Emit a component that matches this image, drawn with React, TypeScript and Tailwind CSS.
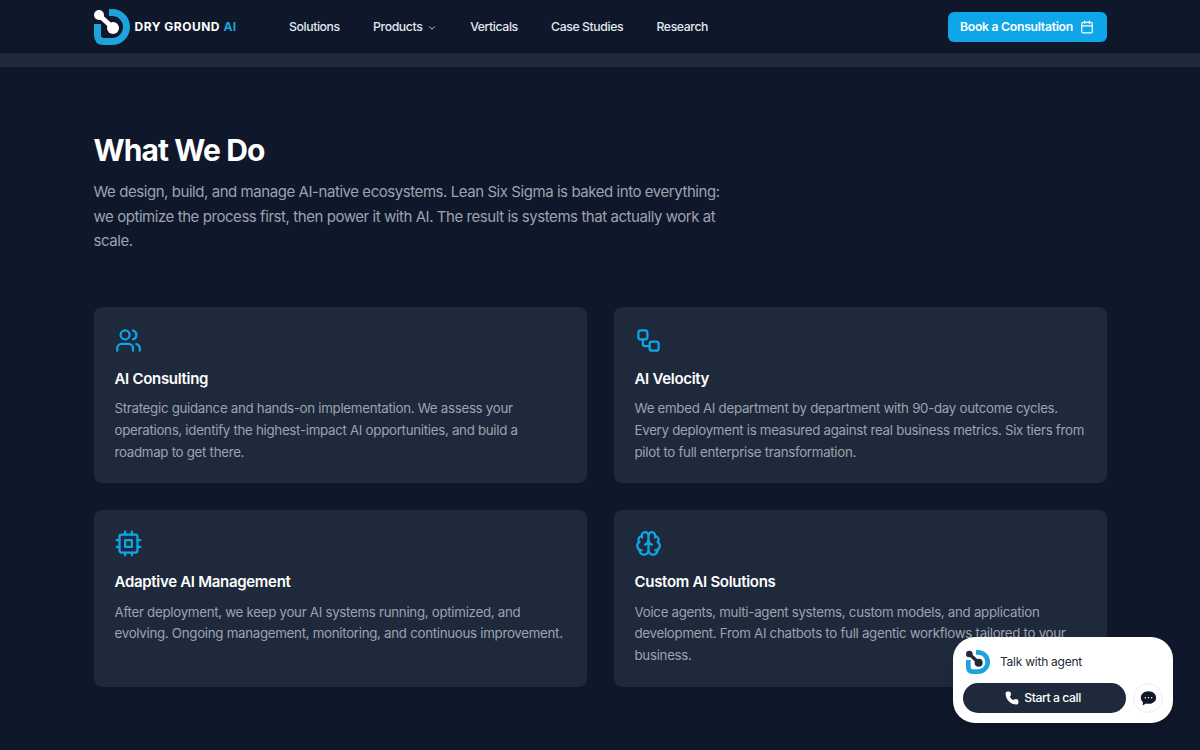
import React from "react";
import { Users, Workflow, Brain, ChevronDown, Calendar, Phone } from "lucide-react";

function Logo({ size, dark }: { size: number; dark?: boolean }) {
  const bar = dark ? "#1e293b" : "#ffffff";
  return (
    <svg width={size} height={size} viewBox="0 0 36 36" fill="none">
      <path d="M3.500 15 V26 Q3.500 32.500 10 32.500 H18 A14.500 14.500 0 0 0 18 3.500 H15" stroke="#1ea3dc" strokeWidth="7" fill="none" />
      <path d="M5 6 L19 19" stroke={bar} strokeWidth="5" />
      <circle cx="5" cy="6" r="5" fill={bar} />
      <circle cx="19" cy="19" r="6" fill={bar} />
    </svg>
  );
}

function CpuIcon({ size, strokeWidth, className }: { size: number; strokeWidth: number; className?: string }) {
  return (
    <svg width={size} height={size} viewBox="0 0 24 24" fill="none" stroke="currentColor" strokeWidth={strokeWidth} strokeLinecap="round" strokeLinejoin="round" className={className}>
      <rect x="4" y="4" width="16" height="16" rx="2" />
      <rect x="9" y="9" width="6" height="6" />
      <path d="M9 1.500v2.500M15 1.500v2.500M9 20v2.500M15 20v2.500M1.500 9h2.500M1.500 15h2.500M20 9h2.500M20 15h2.500" />
    </svg>
  );
}

const cards = [
  { Icon: Users, title: "AI Consulting", text: "Strategic guidance and hands-on implementation. We assess your operations, identify the highest-impact AI opportunities, and build a roadmap to get there." },
  { Icon: Workflow, title: "AI Velocity", text: "We embed AI department by department with 90-day outcome cycles. Every deployment is measured against real business metrics. Six tiers from pilot to full enterprise transformation." },
  { Icon: CpuIcon, title: "Adaptive AI Management", text: "After deployment, we keep your AI systems running, optimized, and evolving. Ongoing management, monitoring, and continuous improvement." },
  { Icon: Brain, title: "Custom AI Solutions", text: "Voice agents, multi-agent systems, custom models, and application development. From AI chatbots to full agentic workflows tailored to your business." },
];

export default function App() {
  return (
    <div className="relative h-[750px] overflow-hidden bg-[#0f172a] font-['Inter',sans-serif]">
      <header className="h-[54px] bg-[#0f172a] border-b border-[#1b2638]">
        <div className="mx-auto flex h-full w-[1013px] items-center">
          <div className="flex w-[195.500px] items-center gap-[5px]">
            <Logo size={36} />
            <span className="text-[12px] font-bold tracking-[0.5px] text-white whitespace-nowrap">
              DRY GROUND <span className="text-[#1ea3dc]">AI</span>
            </span>
          </div>
          <nav className="flex items-center gap-[33.300px] pt-[2px] text-[12.25px] font-medium tracking-[-0.4px] text-[#e2e8f0]">
            <span>Solutions</span>
            <span className="flex items-center gap-[4.500px]">Products <ChevronDown size={10} /></span>
            <span>Verticals</span>
            <span>Case Studies</span>
            <span>Research</span>
          </nav>
          <button className="ml-auto flex h-[30px] w-[159px] items-center justify-center gap-[7px] rounded-md bg-[#0ea5e9] pt-[1px] text-[12.25px] font-semibold tracking-[-0.3px] text-white">
            Book a Consultation <Calendar size={14} />
          </button>
        </div>
      </header>
      <div className="h-[13px] bg-[#1e293b]" />
      <main className="mx-auto w-[1013px] pt-[62px]">
        <h2 className="text-[30px] leading-[42px] font-bold tracking-[-0.9px] text-white">What We Do</h2>
        <p className="mt-[9px] w-[630px] text-[15px] leading-[24.5px] tracking-[-0.44px] text-[#9ca3af]">
          We design, build, and manage AI-native ecosystems. Lean Six Sigma is baked into everything: we optimize the process first, then power it with AI. The result is systems that actually work at scale.
        </p>
        <div className="mt-[53px] grid grid-cols-2 gap-x-[27px] gap-y-[27px]">
          {cards.map(({ Icon, title, text }) => (
            <div key={title} className="h-[176.500px] rounded-lg bg-[#1e293b] px-[21px] pt-[20px]">
              <Icon size={27} strokeWidth={2} className="text-[#0ea5e9]" />
              <h3 className="mt-[13px] text-[15px] leading-[24.5px] font-semibold tracking-[-0.3px] text-white">{title}</h3>
              <p className="mt-[7px] text-[13.300px] leading-[21.875px] tracking-[-0.29px] text-[#9ca3af]">{text}</p>
            </div>
          ))}
        </div>
      </main>
      <div className="absolute left-[953px] top-[637px] h-[86px] w-[220px] rounded-[22px] bg-white px-[10px] pt-[13px] shadow-lg">
        <div className="flex items-center gap-[10px] pl-[3px]">
          <Logo size={24} dark />
          <span className="text-[12px] tracking-[-0.25px] text-[#1f2937]">Talk with agent</span>
        </div>
        <div className="mt-[9px] flex items-center gap-[7px]">
          <button className="flex h-[30px] w-[163px] items-center justify-center gap-[5px] rounded-full bg-[#1e293b] pr-[3px] text-[12.25px] font-medium tracking-[-0.45px] text-white">
            <Phone size={14} fill="white" /> Start a call
          </button>
          <span className="flex h-[30px] w-[30px] items-center justify-center rounded-full border border-[#eceef1]">
            <svg width="17" height="17" viewBox="0 0 16 16"><path d="M8 1.200C3.900 1.200.8 3.800.8 7.200c0 1.700.8 3.200 2.100 4.300L2.400 14.600l3.200-1.900c.8.2 1.600.3 2.400.3 4.100 0 7.200-2.600 7.200-5.800S12.100 1.200 8 1.200z" fill="#111827"/><circle cx="5" cy="7.300" r=".7" fill="#fff"/><circle cx="8" cy="7.300" r=".7" fill="#fff"/><circle cx="11" cy="7.300" r=".7" fill="#fff"/></svg>
          </span>
        </div>
      </div>
    </div>
  );
}
